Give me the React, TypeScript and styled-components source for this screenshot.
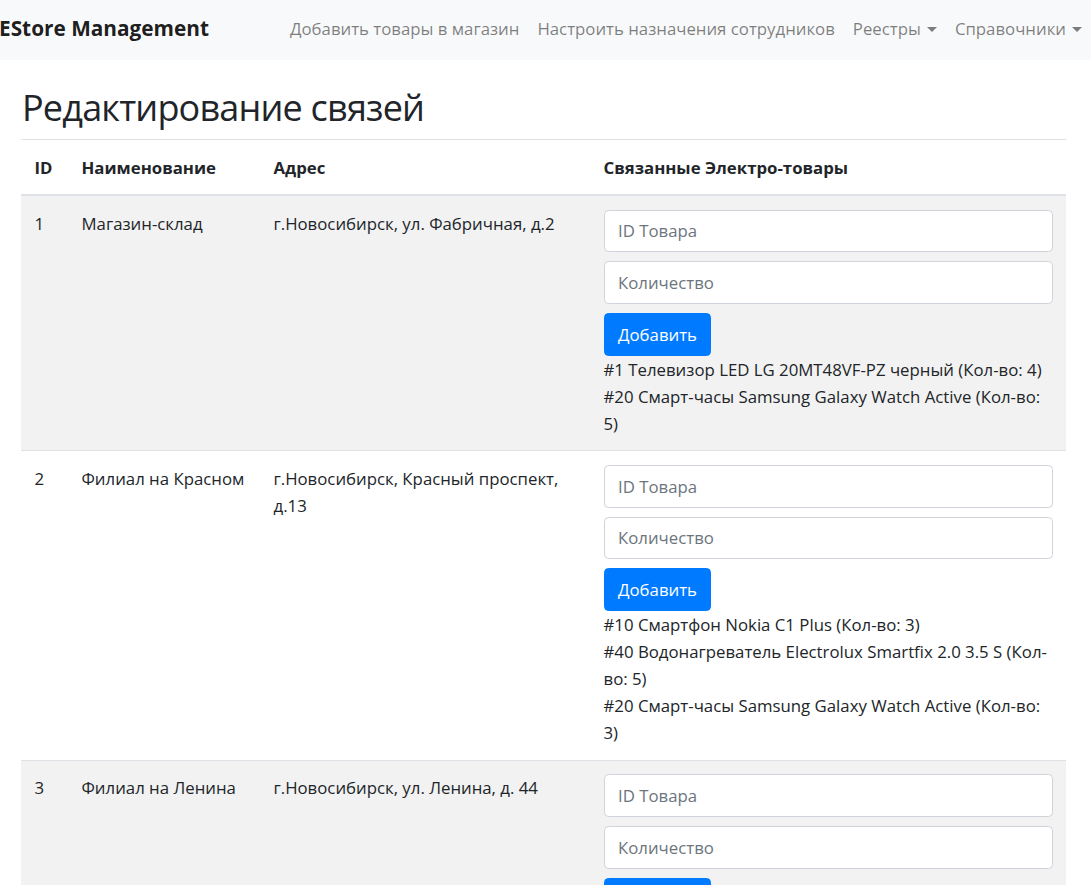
import React from "react";
import styled, { createGlobalStyle, css } from "styled-components";

const FONT = `"Open Sans", "Noto Sans", "DejaVu Sans", sans-serif`;

const Global = createGlobalStyle`
  * { box-sizing: border-box; }
  html, body { margin: 0; padding: 0; background: #fff; }
  body {
    font-family: ${FONT};
    font-size: 16.8px;
    line-height: 27px;
    color: #212529;
    overflow: hidden;
  }
`;

const Navbar = styled.nav`
  display: flex;
  align-items: center;
  height: 60px;
  padding-bottom: 3px;
  background: #f8f9fa;
`;

const Brand = styled.a`
  font-size: 20.8px;
  font-weight: 700;
  line-height: 33px;
  color: rgba(0, 0, 0, 0.9);
  margin-left: -1px;
  white-space: nowrap;
`;

const NavList = styled.ul`
  display: flex;
  margin: 0 0 0 auto;
  padding: 0;
  list-style: none;
`;

const NavLink = styled.a<{ $dropdown?: boolean }>`
  display: flex;
  align-items: center;
  padding: 9px 9px;
  color: rgba(0, 0, 0, 0.5);
  white-space: nowrap;
  ${(p) =>
    p.$dropdown &&
    css`
      &::after {
        content: "";
        display: inline-block;
        margin-left: 6px;
        margin-top: 1px;
        border-top: 5px solid;
        border-left: 5px solid transparent;
        border-right: 5px solid transparent;
      }
    `}
`;

const Main = styled.main`
  padding: 0 25px 0 21px;
`;

const Title = styled.h1`
  margin: 22px 0 5px 1px;
  font-size: 36px;
  font-weight: 500;
  line-height: 52px;
  letter-spacing: -0.8px;
`;

const Table = styled.table`
  width: 100%;
  border-collapse: collapse;
  table-layout: fixed;
`;

const Th = styled.th<{ $w: number }>`
  width: ${(p) => p.$w}px;
  text-align: left;
  padding: 13.5px;
  border-top: 1px solid #dee2e6;
  border-bottom: 2px solid #dee2e6;
  font-weight: 700;
  vertical-align: bottom;
`;

const Row = styled.tr<{ $striped: boolean }>`
  background: ${(p) => (p.$striped ? "#f2f2f2" : "transparent")};
`;

const Td = styled.td`
  padding: 13.5px;
  border-top: 1px solid #dee2e6;
  vertical-align: top;
`;

const Input = styled.input`
  display: block;
  width: 100%;
  height: 42.75px;
  margin-bottom: 9px;
  padding: 6.75px 13.5px;
  font-family: ${FONT};
  font-size: 16.8px;
  color: #495057;
  background: #fff;
  border: 1px solid #ced4da;
  border-radius: 4.5px;
  &::placeholder {
    color: #6c757d;
  }
`;

const Button = styled.button`
  display: block;
  height: 42.75px;
  padding: 6.75px 13.5px;
  font-family: ${FONT};
  font-size: 16.8px;
  line-height: 27px;
  color: #fff;
  background: #007bff;
  border: 1px solid #007bff;
  border-radius: 4.5px;
`;

const Item = styled.div``;

type Store = {
  id: number;
  name: string;
  address: string;
  items: string[];
};

const stores: Store[] = [
  {
    id: 1,
    name: "Магазин-склад",
    address: "г.Новосибирск, ул. Фабричная, д.2",
    items: [
      "#1 Телевизор LED LG 20MT48VF-PZ черный (Кол-во: 4)",
      "#20 Смарт-часы Samsung Galaxy Watch Active (Кол-во: 5)",
    ],
  },
  {
    id: 2,
    name: "Филиал на Красном",
    address: "г.Новосибирск, Красный проспект, д.13",
    items: [
      "#10 Смартфон Nokia C1 Plus (Кол-во: 3)",
      "#40 Водонагреватель Electrolux Smartfix 2.0 3.5 S (Кол-во: 5)",
      "#20 Смарт-часы Samsung Galaxy Watch Active (Кол-во: 3)",
    ],
  },
  {
    id: 3,
    name: "Филиал на Ленина",
    address: "г.Новосибирск, ул. Ленина, д. 44",
    items: [],
  },
];

export default function App() {
  return (
    <>
      <Global />
      <Navbar>
        <Brand>EStore Management</Brand>
        <NavList>
          <li>
            <NavLink>Добавить товары в магазин</NavLink>
          </li>
          <li>
            <NavLink>Настроить назначения сотрудников</NavLink>
          </li>
          <li>
            <NavLink $dropdown>Реестры</NavLink>
          </li>
          <li>
            <NavLink $dropdown>Справочники</NavLink>
          </li>
        </NavList>
      </Navbar>
      <Main>
        <Title>Редактирование связей</Title>
        <Table>
          <thead>
            <tr>
              <Th $w={47}>ID</Th>
              <Th $w={192}>Наименование</Th>
              <Th $w={330}>Адрес</Th>
              <Th $w={476}>Связанные Электро-товары</Th>
            </tr>
          </thead>
          <tbody>
            {stores.map((s, i) => (
              <Row key={s.id} $striped={i % 2 === 0}>
                <Td>{s.id}</Td>
                <Td>{s.name}</Td>
                <Td>{s.address}</Td>
                <Td>
                  <Input placeholder="ID Товара" />
                  <Input placeholder="Количество" />
                  <Button>Добавить</Button>
                  {s.items.map((it) => (
                    <Item key={it}>{it}</Item>
                  ))}
                </Td>
              </Row>
            ))}
          </tbody>
        </Table>
      </Main>
    </>
  );
}
